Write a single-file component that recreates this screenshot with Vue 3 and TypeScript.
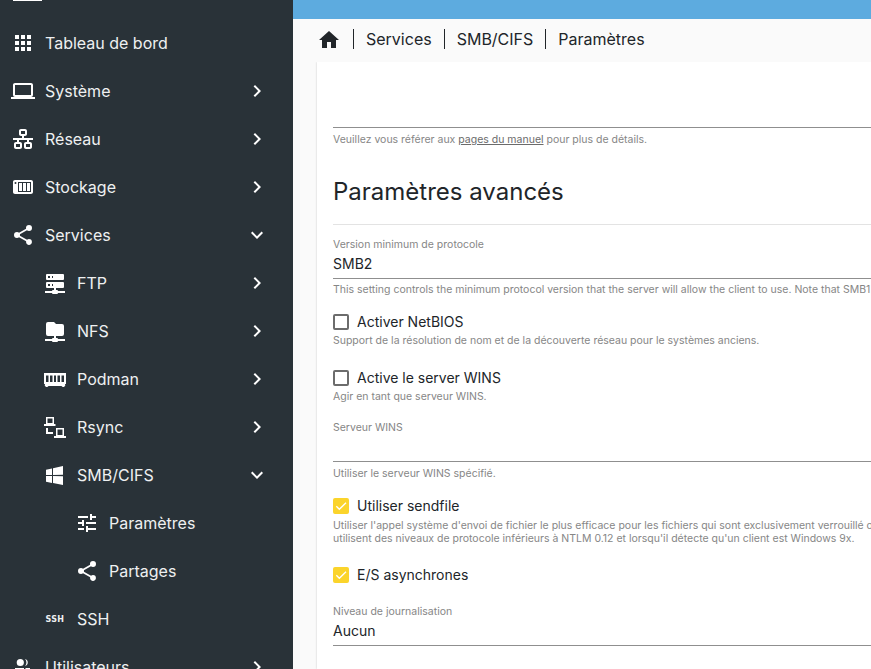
<script setup lang="ts">
const mdi: Record<string, string> = {
  account: 'M9.3 3.9A3.6 3.6 0 1 0 9.3 11.1A3.6 3.6 0 1 0 9.3 3.9M14 4A3.6 3.6 0 0 1 14 11A5 5 0 0 0 14 4M4 13H13V20H4ZM14.5 13H19V20H14.5Z',
  apps: 'M16,20H20V16H16M16,14H20V10H16M10,8H14V4H10M16,8H20V4H16M10,14H14V10H10M4,14H8V10H4M4,20H8V16H4M10,20H14V16H10M4,8H8V4H4V8Z',
  laptop: 'M4,6H20V16H4M20,18A2,2 0 0,0 22,16V6C22,4.89 21.1,4 20,4H4C2.89,4 2,4.89 2,6V16A2,2 0 0,0 4,18H0V20H24V18H20Z',
  lan: 'M10,2C8.89,2 8,2.89 8,4V7C8,8.11 8.89,9 10,9H11V11H2V13H6V15H5C3.89,15 3,15.89 3,17V20C3,21.11 3.89,22 5,22H9C10.11,22 11,21.11 11,20V17C11,15.89 10.11,15 9,15H8V13H16V15H15C13.89,15 13,15.89 13,17V20C13,21.11 13.89,22 15,22H19C20.11,22 21,21.11 21,20V17C21,15.89 20.11,15 19,15H18V13H22V11H13V9H14C15.11,9 16,8.11 16,7V4C16,2.89 15.11,2 14,2H10M10,4H14V7H10V4M5,17H9V20H5V17M15,17H19V20H15V17Z',
  nas: 'M4,5C2.89,5 2,5.89 2,7V17C2,18.11 2.89,19 4,19H20C21.11,19 22,18.11 22,17V7C22,5.89 21.11,5 20,5H4M4.5,7A1,1 0 0,1 5.5,8A1,1 0 0,1 4.5,9A1,1 0 0,1 3.5,8A1,1 0 0,1 4.5,7M7,7H20V17H7V7M8,8V16H11V8H8M12,8V16H15V8H12M16,8V16H19V8H16Z',
  share: 'M18,16.08C17.24,16.08 16.56,16.38 16.04,16.85L8.91,12.7C8.96,12.47 9,12.24 9,12C9,11.76 8.96,11.53 8.91,11.3L15.96,7.19C16.5,7.69 17.21,8 18,8A3,3 0 0,0 21,5A3,3 0 0,0 18,2A3,3 0 0,0 15,5C15,5.24 15.04,5.47 15.09,5.7L8.04,9.81C7.5,9.31 6.79,9 6,9A3,3 0 0,0 3,12A3,3 0 0,0 6,15C6.79,15 7.5,14.69 8.04,14.19L15.16,18.34C15.11,18.55 15.08,18.77 15.08,19C15.08,20.61 16.39,21.91 18,21.91C19.61,21.91 20.92,20.61 20.92,19A2.92,2.92 0 0,0 18,16.08Z',
  server: 'M13,19H14A1,1 0 0,1 15,20H22V22H15A1,1 0 0,1 14,23H10A1,1 0 0,1 9,22H2V20H9A1,1 0 0,1 10,19H11V17H4A1,1 0 0,1 3,16V12A1,1 0 0,1 4,11H20A1,1 0 0,1 21,12V16A1,1 0 0,1 20,17H13V19M4,3H20A1,1 0 0,1 21,4V8A1,1 0 0,1 20,9H4A1,1 0 0,1 3,8V4A1,1 0 0,1 4,3M9,7H10V5H9V7M9,15H10V13H9V15M5,5V7H7V5H5M5,13V15H7V13H5Z',
  folder: 'M3,15V5A2,2 0 0,1 5,3H11L13,5H19A2,2 0 0,1 21,7V15A2,2 0 0,1 19,17H13V19H14A1,1 0 0,1 15,20H22V22H15A1,1 0 0,1 14,23H10A1,1 0 0,1 9,22H2V20H9A1,1 0 0,1 10,19H11V17H5A2,2 0 0,1 3,15Z',
  container: 'M1,6H23V17H22A1.8,1.8 0 0,1 18.5,19H5.5A1.8,1.8 0 0,1 2,17H1V6M3,8.5V15H5.5V8.5H3M7,8.5V15H9.5V8.5H7M11,8.5V15H13V8.5H11M14.5,8.5V15H17V8.5H14.5M18.5,8.5V15H21V8.5H18.5Z',
  rsync: 'M3,2H11V9H12.5V11H1V9H3V2M4.5,3.5V8H9.5V3.5H4.5M3,13H5V17H10V19H3V13M13,13H21V21H23V23H11V21H13V13M14.5,14.5V20H19.5V14.5H14.5Z',
  windows: 'M3,12V6.75L9,5.43V11.91L3,12M20,3V11.75L10,11.9V5.21L20,3M3,13L9,13.09V19.9L3,18.75V13M20,13.25V22L10,20.09V13.1L20,13.25Z',
  tune: 'M3,17V19H9V17H3M3,5V7H13V5H3M13,21V19H21V17H13V15H11V21H13M7,9V11H3V13H7V15H9V9H7M21,13V11H11V13H21M15,9H17V7H21V5H17V3H15V9Z',
  right: 'M8.59,16.58L13.17,12L8.59,7.41L10,6L16,12L10,18L8.59,16.58Z',
  down: 'M7.41,8.58L12,13.17L16.59,8.58L18,10L12,16L6,10L7.41,8.58Z',
  home: 'M10,20V14H14V20H19V12H22L12,3L2,12H5V20H10Z',
}

interface Item { label: string; icon?: string; level: number; arrow?: 'right' | 'down' }
const items: Item[] = [
  { label: 'Tableau de bord', icon: 'apps', level: 0 },
  { label: 'Système', icon: 'laptop', level: 0, arrow: 'right' },
  { label: 'Réseau', icon: 'lan', level: 0, arrow: 'right' },
  { label: 'Stockage', icon: 'nas', level: 0, arrow: 'right' },
  { label: 'Services', icon: 'share', level: 0, arrow: 'down' },
  { label: 'FTP', icon: 'server', level: 1, arrow: 'right' },
  { label: 'NFS', icon: 'folder', level: 1, arrow: 'right' },
  { label: 'Podman', icon: 'container', level: 1, arrow: 'right' },
  { label: 'Rsync', icon: 'rsync', level: 1, arrow: 'right' },
  { label: 'SMB/CIFS', icon: 'windows', level: 1, arrow: 'down' },
  { label: 'Paramètres', icon: 'tune', level: 2 },
  { label: 'Partages', icon: 'share', level: 2 },
  { label: 'SSH', level: 1 },
  { label: 'Utilisateurs', icon: 'account', level: 0, arrow: 'right' },
]
</script>

<template>
  <div class="shell">
    <aside class="sidebar">
      <div class="clipped-top"><span class="logo-edge"></span></div>
      <div v-for="item in items" :key="item.label" class="nav-row" :class="`level-${item.level}`">
        <span class="nav-icon">
          <svg v-if="item.icon" viewBox="0 0 24 24" width="24" height="24"><path :d="mdi[item.icon]" /></svg>
          <span v-else class="ssh-mark">SSH</span>
        </span>
        <span class="nav-label">{{ item.label }}</span>
        <svg v-if="item.arrow" class="nav-arrow" viewBox="0 0 24 24" width="24" height="24"><path :d="mdi[item.arrow]" /></svg>
      </div>
    </aside>
    <main class="main">
      <div class="topbar"></div>
      <nav class="crumbs">
        <svg class="home" viewBox="0 0 24 24" width="24" height="24"><path :d="mdi.home" /></svg>
        <span class="crumb">Services</span>
        <span class="crumb">SMB/CIFS</span>
        <span class="crumb">Paramètres</span>
      </nav>
      <div class="content">
        <section class="card">
          <div class="line top-line"></div>
          <p class="hint">Veuillez vous référer aux <u>pages du manuel</u> pour plus de détails.</p>
          <h2 class="title">Paramètres avancés</h2>
          <div class="divider"></div>

          <div class="field first-field">
            <div class="field-label">Version minimum de protocole</div>
            <div class="field-value">SMB2</div>
            <div class="line"></div>
            <p class="hint nowrap">This setting controls the minimum protocol version that the server will allow the client to use. Note that SMB1 is deprecated and should not be enabled unless strictly required.</p>
          </div>

          <label class="check check-a">
            <span class="box"></span><span class="check-label">Activer NetBIOS</span>
          </label>
          <p class="hint nowrap spaced-hint">Support de la résolution de nom et de la découverte réseau pour le systèmes anciens.</p>

          <label class="check check-b">
            <span class="box"></span><span class="check-label">Active le server WINS</span>
          </label>
          <p class="hint nowrap spaced-hint">Agir en tant que serveur WINS.</p>

          <div class="field wins-field">
            <div class="field-label">Serveur WINS</div>
            <div class="field-value empty"></div>
            <div class="line"></div>
            <p class="hint nowrap">Utiliser le serveur WINS spécifié.</p>
          </div>

          <label class="check check-c">
            <span class="box on"><svg viewBox="0 0 24 24" width="16" height="16"><path d="M5 12.5l4.5 4.5L19.5 7" fill="none" stroke="#fff" stroke-width="2" /></svg></span><span class="check-label">Utiliser sendfile</span>
          </label>
          <p class="hint nowrap two">Utiliser l'appel système d'envoi de fichier le plus efficace pour les fichiers qui sont exclusivement verrouillé ou non verrouillés. Ceci peut améliorer les performances, mais les clients qui
            <br />utilisent des niveaux de protocole inférieurs à NTLM 0.12 et lorsqu'il détecte qu'un client est Windows 9x.</p>

          <label class="check check-d">
            <span class="box on"><svg viewBox="0 0 24 24" width="16" height="16"><path d="M5 12.5l4.5 4.5L19.5 7" fill="none" stroke="#fff" stroke-width="2" /></svg></span><span class="check-label">E/S asynchrones</span>
          </label>

          <div class="field log-field">
            <div class="field-label">Niveau de journalisation</div>
            <div class="field-value">Aucun</div>
            <div class="line"></div>
          </div>
        </section>
      </div>
    </main>
  </div>
</template>

<style>
html, body { margin: 0; overflow: hidden; }
</style>

<style scoped>
.shell {
  display: flex;
  width: 871px;
  height: 669px;
  overflow: hidden;
  font-family: Inter, "Liberation Sans", sans-serif;
}
.sidebar {
  width: 293px;
  flex: none;
  background: #293238;
  color: #eef0f1;
  overflow: hidden;
}
.clipped-top { height: 19px; }
.logo-edge { display: block; width: 29px; height: 1px; margin-left: 13px; background: #fff; }
.nav-row {
  height: 48px;
  display: flex;
  align-items: center;
  padding-left: 11px;
  padding-right: 24px;
  font-size: 16px;
  font-weight: 400;
}
.level-1 { padding-left: 43px; }
.level-2 { padding-left: 75px; }
.nav-icon { width: 24px; height: 24px; display: flex; align-items: center; justify-content: center; margin-right: 10px; flex: none; }
.nav-icon svg, .nav-arrow { fill: #fff; display: block; }
.nav-label { flex: 1; white-space: nowrap; }
.ssh-mark { font-family: "DejaVu Sans", sans-serif; font-size: 8px; font-weight: 700; letter-spacing: .3px; }
.main { flex: 1; min-width: 0; background: #fafafa; display: flex; flex-direction: column; }
.topbar { height: 19px; background: #5dabdf; flex: none; }
.crumbs { height: 43px; box-sizing: border-box; padding-bottom: 4px; flex: none; display: flex; align-items: center; padding-left: 24px; color: #212529; }
.home { fill: #212529; margin-right: 12px; flex: none; position: relative; top: 1px; }
.crumb {
  border-left: 1px solid #212529;
  padding-left: 12px;
  margin-right: 12px;
  font-size: 16px;
  line-height: 20px;
}
.content { flex: 1; padding-left: 24px; min-height: 0; overflow: hidden; }
.card {
  background: #fff;
  height: 100%;
  padding: 65px 0 0 16px;
  box-shadow: 0 0 2px rgba(0, 0, 0, .2);
  color: #212529;
  box-sizing: border-box;
  overflow: hidden;
}
.line { height: 1px; background: #8f8f8f; }
.hint { margin: 0; font-size: 10.5px; line-height: 16px; color: #868686; }
.hint.two { line-height: 13px; margin-top: 3px; }
.hint.spaced-hint { margin-top: 1px; }
.hint u { color: #6b6b6b; }
.nowrap { white-space: nowrap; }
.top-line { margin-bottom: 4px; }
.title { font-size: 24px; font-weight: 400; line-height: 32px; margin: 28px 0 16px; color: #212529; }
.divider { height: 1px; background: #e3e3e3; }
.field-label { font-size: 10.5px; line-height: 14px; color: #868686; }
.field-value { font-size: 14px; line-height: 20px; height: 21px; padding: 2px 0 3px; }
.field .hint { margin-top: 4px; }
.first-field { margin-top: 13px; }
.first-field .hint { margin-top: 3px; }
.check { display: flex; align-items: center; height: 20px; }
.box { width: 16px; height: 16px; box-sizing: border-box; border: 2px solid #6c6c6c; border-radius: 2px; margin-right: 8px; flex: none; display: block; }
.box.on { background: #fbd42b; border: 0; }
.box svg { display: block; }
.check-label { font-size: 14px; line-height: 20px; }
.check-a { margin-top: 14px; }
.check-b { margin-top: 19px; }
.wins-field { margin-top: 16px; }
.check-c { margin-top: 14px; }
.check-d { margin-top: 20px; }
.log-field { margin-top: 20px; }
</style>
